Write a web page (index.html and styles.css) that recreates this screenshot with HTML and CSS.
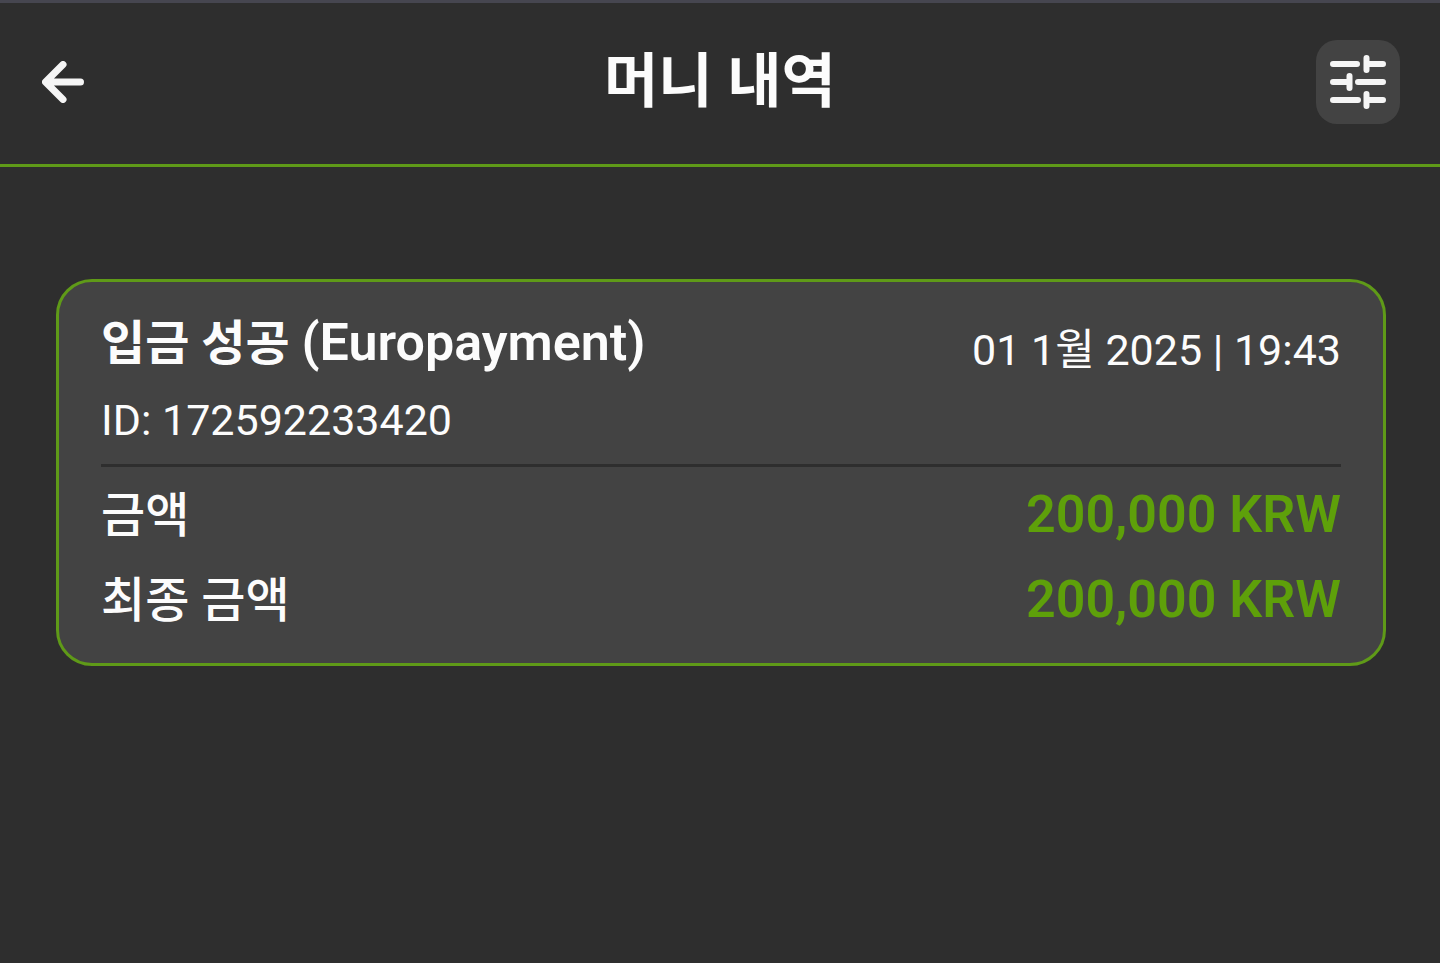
FILE: index.html
```html
<!DOCTYPE html>
<html lang="ko">
<head>
    <meta charset="UTF-8">
    <meta name="viewport" content="width=device-width, initial-scale=1.0">
    <title>머니 내역</title>
    <link rel="stylesheet" href="styles.css">
</head>
<body>
    <header>
        <button type="button" class="back-button" aria-label="뒤로">
            <svg width="42" height="42" viewBox="0 0 42 42" fill="none" stroke="#f5f5f5" stroke-width="7" stroke-linecap="round" stroke-linejoin="round">
                <path d="M38.5 21H4M21 3.5L3.5 21L21 38.5"/>
                <path d="M5 21L12 14V28Z" fill="#f5f5f5" stroke="none"/>
            </svg>
        </button>
        <h1>머니 내역</h1>
        <button type="button" class="filter-button" aria-label="필터">
            <svg width="56" height="56" viewBox="0 0 56 56" fill="none" stroke="#f5f5f5" stroke-width="6" stroke-linecap="round">
                <path d="M3 10H27M37 10H53M36.500 4V16"/>
                <path d="M3 28H19M28 28H53M19.500 22V34"/>
                <path d="M3 46H28M37 46H53M36.500 40V52"/>
            </svg>
        </button>
    </header>

    <main>
        <article class="card">
            <div class="card-top">
                <h2>입금 성공 <span class="method">(Europayment)</span></h2>
                <time datetime="2025-01-01T19:43">01 1월 2025 | 19:43</time>
            </div>
            <p class="card-id">ID: 172592233420</p>
            <dl class="amounts">
                <div class="row">
                    <dt>금액</dt>
                    <dd>200,000 KRW</dd>
                </div>
                <div class="row">
                    <dt>최종 금액</dt>
                    <dd>200,000 KRW</dd>
                </div>
            </dl>
        </article>
    </main>
</body>
</html>
```
FILE: styles.css
```css
* {
    box-sizing: border-box;
}
body {
    margin: 0;
    min-height: 100vh;
    background-color: #2e2e2e;
    border-top: 3px solid #464650;
    color: #fcfcfc;
    font-family: Roboto, "Noto Sans CJK KR", sans-serif;
}
h1, h2, p, dl, dd {
    margin: 0;
}
button {
    display: flex;
    align-items: center;
    padding: 0;
    border: none;
    background: none;
    cursor: pointer;
}
header {
    display: grid;
    grid-template-columns: 84px 1fr 84px;
    align-items: center;
    padding: 37px 40px 40px;
    border-bottom: 3px solid #5f9a18; /* Green line under the title bar */
}
h1 {
    font-size: 59px;
    font-weight: 700;
    line-height: 84px;
    text-align: center;
}
.back-button {
    width: 84px;
    height: 84px;
    padding-left: 2px;
}
.filter-button {
    justify-content: center;
    width: 84px;
    height: 84px;
    border-radius: 21px;
    background-color: #434343;
}
main {
    padding: 112px 54px 56px 56px;
}
.card {
    padding: 24px 42px 20px;
    border: 3px solid #5f9a18;
    border-radius: 36px;
    background-color: #434343;
}
.card-top {
    display: flex;
    justify-content: space-between;
    align-items: flex-end;
}
h2 {
    font-size: 48px;
    font-weight: 700;
    line-height: 76px;
}
.method {
    font-size: 52px;
    font-weight: 600;
    line-height: 1;
}
time {
    font-size: 43px;
    line-height: 64px;
}
.card-id {
    padding: 3px 0 9px;
    border-bottom: 3px solid #2e2e2e; /* Divider above the amounts */
    font-size: 43px;
    line-height: 70px;
}
.amounts {
    padding-top: 6px;
}
.row {
    display: flex;
    justify-content: space-between;
    align-items: baseline;
    line-height: 84px;
}
dt {
    font-size: 48px;
    font-weight: 500;
}
dd {
    color: #5ea00a;
    font-size: 52px;
    font-weight: 600;
}
@media (max-width: 768px) {
    .card-top {
        flex-direction: column; /* Stack the date under the heading */
        align-items: flex-start;
    }
}
```
